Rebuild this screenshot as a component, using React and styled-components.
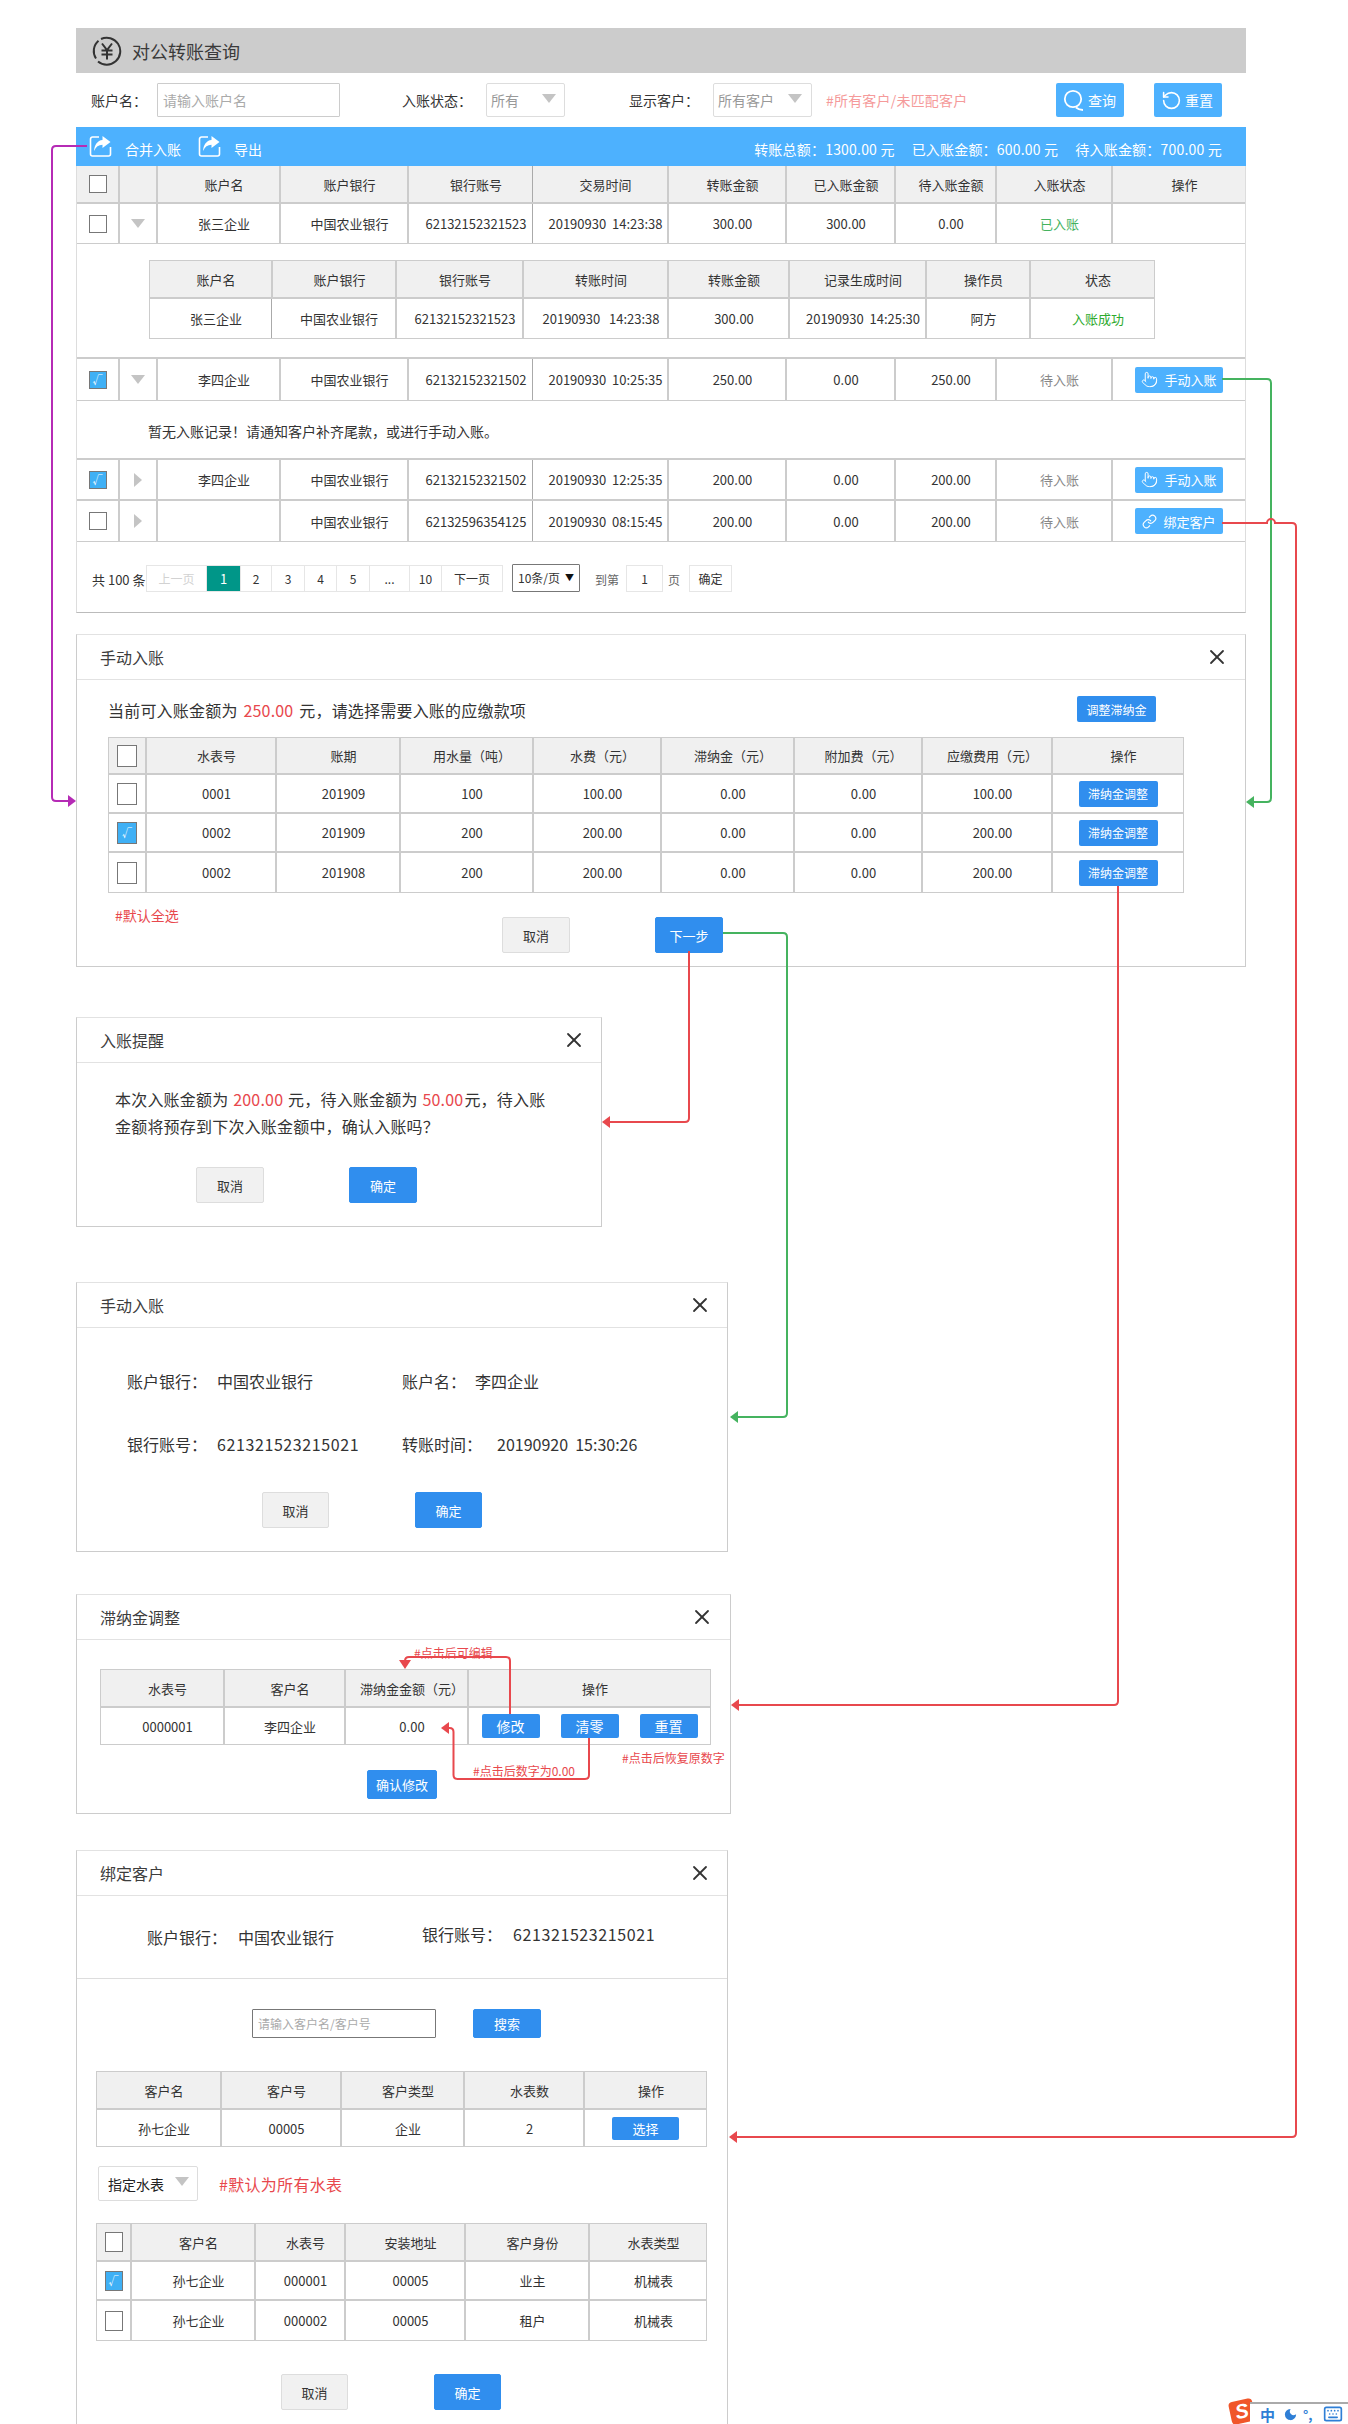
import React from "react";
import styled, { createGlobalStyle } from "styled-components";
import { X, Pointer, Link, RotateCcw, Moon, Keyboard } from "lucide-react";

const GlobalStyle = createGlobalStyle`
  html, body { margin: 0; padding: 0; background: #fff; }
  body { font-family: "Noto Sans CJK SC", "Noto Sans", sans-serif; color: #333; }
  * { box-sizing: border-box; }
`;

const BLUE = "#4db1fe";
const BTN_BLUE = "#308eee";
const LINE = "#ccc";
const RED = "#e8484d";
const GREEN = "#45b35f";
const PURPLE = "#b52bb5";

const Page = styled.div`
  position: relative;
  width: 1348px;
  height: 2424px;
  overflow: hidden;
  padding: 28px 0 0 76px;
`;

const TitleBar = styled.div`
  display: flex;
  align-items: center;
  gap: 10px;
  width: 1170px;
  height: 45px;
  padding-left: 16px;
  background: #ccc;
  font-size: 18px;
  color: #3a3a3a;
`;

const FilterRow = styled.div`
  display: flex;
  align-items: center;
  width: 1170px;
  height: 54px;
  padding-left: 15px;
  font-size: 14px;
`;

const FilterLabel = styled.span`
  flex: none;
  width: ${(p) => p.$w}px;
  margin-left: ${(p) => p.$ml || 0}px;
`;

const TextInput = styled.input`
  flex: none;
  width: ${(p) => p.$w}px;
  height: ${(p) => p.$h}px;
  padding: 0 5px;
  border: 1px solid ${(p) => p.$border || "#ccc"};
  border-radius: 1px;
  font: inherit;
  font-size: ${(p) => p.$size || 14}px;
  outline: none;
  &::placeholder { color: #aaa; }
`;

const SelectBox = styled.div`
  flex: none;
  display: flex;
  align-items: center;
  justify-content: space-between;
  width: ${(p) => p.$w}px;
  height: ${(p) => p.$h || 34}px;
  padding: 0 ${(p) => p.$pr || 8}px 0 ${(p) => p.$pl || 4}px;
  border: 1px solid #ddd;
  border-radius: 2px;
  font-size: 14px;
  color: ${(p) => p.$color || "#999"};
`;

const Triangle = styled.i`
  display: block;
  flex: none;
  width: 0;
  height: 0;
  ${(p) =>
    p.$dir === "right"
      ? `border-top: 7px solid transparent; border-bottom: 7px solid transparent; border-left: 8px solid #c4c4c4;`
      : `border-left: 7px solid transparent; border-right: 7px solid transparent; border-top: 9px solid #c4c4c4;`}
  margin-bottom: ${(p) => p.$mb || 0}px;
`;

const Hint = styled.span`
  flex: none;
  width: ${(p) => p.$w}px;
  margin-left: ${(p) => p.$ml}px;
  font-size: ${(p) => p.$size || 14}px;
  letter-spacing: ${(p) => p.$track || 0}px;
  color: ${(p) => p.$color};
`;

const ToolButton = styled.button`
  flex: none;
  display: flex;
  align-items: center;
  gap: 3px;
  width: 68px;
  height: 34px;
  margin-left: ${(p) => p.$ml || 0}px;
  padding: 0 0 0 7px;
  border: 0;
  border-radius: 2px;
  background: ${BLUE};
  color: #fff;
  font: inherit;
  font-size: 14px;
`;

const ToolBar = styled.div`
  display: flex;
  align-items: center;
  width: 1170px;
  height: 39px;
  padding: 0 24px 0 13px;
  background: ${BLUE};
  color: #fff;
  font-size: 14px;
`;

const ToolAction = styled.span`
  display: flex;
  align-items: center;
  gap: 13px;
  margin-right: 17px;
  span { padding-top: 5px; }
`;

const Totals = styled.div`
  display: flex;
  gap: 17px;
  margin-left: auto;
  padding-top: 5px;
  letter-spacing: 0.2px;
`;

const MainPanel = styled.div`
  width: 1170px;
  height: 447px;
  border-left: 1px solid #ddd;
  border-right: 1px solid #ddd;
  border-bottom: 1px solid #bbb;
`;

const Row = styled.div`
  display: grid;
  grid-template-columns: ${(p) => p.$cols};
  height: ${(p) => p.$h}px;
  border-bottom: ${(p) => p.$line ?? 2}px solid ${LINE};
  background: ${(p) => (p.$head ? "#f0f0f0" : "#fff")};
  &:last-child { ${(p) => (p.$keepLine ? "" : "border-bottom: 0;")} }
  ${(p) => (p.$dark ? `& > :nth-child(${p.$dark}) { border-left: 1px solid #aaa; }` : "")}
`;

const Cell = styled.div`
  display: flex;
  align-items: center;
  justify-content: center;
  min-width: 0;
  padding-left: ${(p) => (p.$flush ? 0 : 11)}px;
  border-left: 2px solid ${LINE};
  font-size: 13px;
  white-space: pre;
  color: ${(p) => p.$color || "#333"};
  &:first-child { border-left: 0; }
`;

const Check = styled.span`
  display: flex;
  align-items: center;
  justify-content: center;
  width: ${(p) => p.$w || 18}px;
  height: ${(p) => p.$h || 18}px;
  border: 1px solid #777;
  background: ${(p) => (p.$on ? "#3fb0f5" : "#fff")};
  color: #fff;
  font-size: 10px;
  line-height: 1;
`;

const RowButton = styled.button`
  display: flex;
  align-items: center;
  justify-content: center;
  gap: 6px;
  width: ${(p) => p.$w}px;
  height: ${(p) => p.$h}px;
  padding: 0;
  border: 0;
  border-radius: 2px;
  background: ${(p) => p.$bg || BLUE};
  color: #fff;
  font: inherit;
  font-size: ${(p) => p.$size || 13}px;
`;

const Expanded = styled.div`
  height: ${(p) => p.$h}px;
  padding: ${(p) => p.$pt}px 0 0 ${(p) => p.$pl}px;
  border-bottom: 2px solid ${LINE};
  font-size: 14px;
`;

const TableBox = styled.div`
  width: ${(p) => p.$w}px;
  margin: ${(p) => p.$mt || 0}px 0 0 ${(p) => p.$ml || 0}px;
  border: 1px solid ${LINE};
`;

const Pager = styled.div`
  display: flex;
  align-items: flex-start;
  height: 70px;
  padding: 23px 0 0 15px;
  font-size: 12px;
`;

const PagerTotal = styled.span`
  width: 54px;
  height: 27px;
  line-height: 30px;
  font-size: 13px;
`;

const PageCell = styled.span`
  display: flex;
  align-items: center;
  justify-content: center;
  width: ${(p) => p.$w}px;
  height: 27px;
  margin-left: ${(p) => p.$ml || 0}px;
  border: 1px solid #e6e6e6;
  border-left-width: ${(p) => (p.$first ? 1 : 0)}px;
  background: ${(p) => (p.$on ? "#009688" : "#fff")};
  color: ${(p) => (p.$on ? "#fff" : p.$off ? "#d2d2d2" : "#333")};
  font-size: ${(p) => (p.$on ? 13 : 12)}px;
`;

const PageSize = styled.span`
  display: flex;
  align-items: center;
  justify-content: space-between;
  width: 68px;
  height: 28px;
  margin: -1px 0 0 9px;
  padding: 0 5px 2px 5px;
  border: 1px solid #777;
  border-radius: 1px;
  small { font-size: 9px; color: #111; }
`;

const PagerText = styled.span`
  width: ${(p) => p.$w}px;
  margin-left: ${(p) => p.$ml}px;
  height: 27px;
  line-height: 30px;
  color: #666;
`;

const Modal = styled.section`
  width: ${(p) => p.$w}px;
  height: ${(p) => p.$h}px;
  margin-top: ${(p) => p.$mt}px;
  border: 1px solid #ccc;
  border-top-color: #e2e2e2;
`;

const ModalHead = styled.header`
  display: flex;
  align-items: center;
  justify-content: space-between;
  height: 45px;
  padding: 0 ${(p) => p.$pr || 15}px 0 23px;
  border-bottom: 1px solid #e2e2e2;
  font-size: 16px;
  color: #3d3d3d;
  svg { color: #333; }
`;

const PromptRow = styled.div`
  display: flex;
  align-items: flex-start;
  justify-content: space-between;
  height: 57px;
  padding: 16px 89px 0 31px;
`;

const Prompt = styled.p`
  margin: 0;
  font-size: 16px;
  line-height: 28px;
  letter-spacing: 0.2px;
  white-space: pre;
  em { font-style: normal; margin: 0 2px; color: ${RED}; }
`;

const ActionRow = styled.div`
  display: flex;
  align-items: flex-start;
  margin: ${(p) => p.$mt}px 0 0 ${(p) => p.$ml}px;
`;

const DefaultNote = styled.span`
  width: 387px;
  line-height: 20px;
  font-size: 14px;
  color: ${RED};
`;

const ActionButton = styled.button`
  flex: none;
  width: ${(p) => p.$w || 68}px;
  height: ${(p) => p.$h || 36}px;
  margin: ${(p) => p.$mt || 0}px 0 0 ${(p) => p.$ml || 0}px;
  padding: 0;
  border: 1px solid ${(p) => (p.$primary ? BTN_BLUE : "#ddd")};
  border-radius: 2px;
  background: ${(p) => (p.$primary ? BTN_BLUE : "#f1f1f1")};
  color: ${(p) => (p.$primary ? "#fff" : "#333")};
  font: inherit;
  font-size: 13px;
`;

const MessageBody = styled.p`
  margin: 0;
  padding: 23px 0 0 38px;
  font-size: 16px;
  line-height: 27px;
  letter-spacing: 0.2px;
  white-space: pre;
  em { font-style: normal; margin: 0 1px; color: ${RED}; }
`;

const InfoGrid = styled.div`
  display: grid;
  grid-template-columns: 275px auto;
  row-gap: 39px;
  padding: 41px 0 0 50px;
  font-size: 16px;
  line-height: 24px;
`;

const Field = styled.div`
  display: flex;
  white-space: pre;
  span { flex: none; width: ${(p) => p.$label}px; }
`;

const AccountNo = styled.b`
  font-weight: 400;
  letter-spacing: 0.6px;
`;

const ButtonBar = styled.div`
  display: flex;
  gap: 21px;
`;

const BindInfo = styled.div`
  display: flex;
  align-items: center;
  height: 83px;
  padding-left: 70px;
  border-bottom: 1px solid #ddd;
  font-size: 16px;
`;

const BindField = styled(Field)`
  width: 275px;
  margin-bottom: ${(p) => p.$mb || 0}px;
`;

const SearchRow = styled.div`
  display: flex;
  padding: 30px 0 0 175px;
`;

const MeterRow = styled.div`
  display: flex;
  align-items: center;
  margin: 19px 0 0 21px;
`;

const Annotation = styled.span`
  position: absolute;
  left: ${(p) => p.$x}px;
  top: ${(p) => p.$y}px;
  font-size: 12px;
  line-height: 16px;
  color: ${RED};
  white-space: nowrap;
`;

const Connectors = styled.svg`
  position: absolute;
  left: 0;
  top: 0;
  width: 1348px;
  height: 2424px;
  pointer-events: none;
`;

const ImeBar = styled.div`
  position: absolute;
  right: 0;
  top: 2402px;
  display: flex;
  align-items: center;
  width: 98px;
  height: 22px;
  padding-left: 10px;
  border-top: 2px solid #aaa;
  background: #fff;
  color: #2f7fd6;
`;

const ImeLogo = styled.span`
  position: absolute;
  right: 94px;
  top: 2400px;
  display: flex;
  align-items: center;
  justify-content: center;
  width: 24px;
  height: 23px;
  border-radius: 4px;
  background: #f0562a;
  transform: rotate(-12deg);
  color: #fff;
  font: italic 700 20px "Liberation Sans", sans-serif;
`;

const ImeZh = styled.b`
  width: 23px;
  font-size: 15px;
  font-weight: 700;
`;

const ImePunct = styled.span`
  width: 20px;
  margin-left: 5px;
  font-size: 13px;
  font-weight: 700;
  line-height: 1;
`;

// column edges measured off the page, turned into grid tracks
const tracks = (edges) =>
  edges
    .slice(1)
    .map((e, i) => {
      let w = e - edges[i];
      if (i === 0) w -= 1;
      if (i === edges.length - 2) w -= 1;
      return `${w}px`;
    })
    .join(" ");

const MAIN = tracks([76, 118, 156, 279, 407, 532, 667, 785, 894, 995, 1111, 1246]);
const NESTED = tracks([149, 271, 395, 522, 667, 788, 925, 1029, 1155]);
const ITEMS = tracks([108, 145, 275, 399, 532, 660, 793, 921, 1051, 1184]);
const LATE = tracks([100, 223, 344, 467, 711]);
const CUSTOMER = tracks([96, 220, 340, 463, 583, 707]);
const METERS = tracks([96, 130, 254, 344, 464, 588, 707]);

const YenIcon = () => (
  <svg width="30" height="30" viewBox="0 0 30 30" fill="none" stroke="#333" strokeWidth="2">
    <path d="M9 3 A13.5 13.5 0 1 1 6 25.5" />
    <path d="M4 22.5 A13.5 13.5 0 0 1 6.5 4.8" />
    <path d="M10 7.5 L15 14 L20 7.5 M9.5 14.5 H20.5 M9.5 18.5 H20.5 M15 14 V23.5" />
  </svg>
);

const ShareIcon = () => (
  <svg width="23" height="23" viewBox="0 0 23 23" fill="none">
    <path d="M10 2 H3.5 a2 2 0 0 0 -2 2 v15 a2 2 0 0 0 2 2 h16 a2 2 0 0 0 2 -2 V12" stroke="#fff" strokeWidth="1.6" />
    <path d="M13.5 1 L21.5 7 L13.5 13 V9.7 C9.5 9.7 6.8 11.8 5.2 16 C5 10.5 8.5 5.3 13.5 5 Z" fill="#fff" />
  </svg>
);

const SearchIcon = () => (
  <svg width="22" height="24" viewBox="0 0 22 24" fill="none" stroke="#fff" strokeWidth="1.8">
    <circle cx="10" cy="11" r="8.2" />
    <path d="M13 19.5 Q16 22 20 22" />
  </svg>
);

const Head = ({ cols, h = 38, titles, first, dark }) => (
  <Row $head $cols={cols} $h={h} $dark={dark}>
    {first}
    {titles.map((t, i) => (
      <Cell key={i}>{t}</Cell>
    ))}
  </Row>
);

const mainRows = [
  ["李四企业", "62132152321502", "20190930  12:25:35"],
  ["", "62132596354125", "20190930  08:15:45"],
];

const mainHead = ["账户名", "账户银行", "银行账号", "交易时间", "转账金额", "已入账金额", "待入账金额", "入账状态", "操作"];
const nestedHead = ["账户名", "账户银行", "银行账号", "转账时间", "转账金额", "记录生成时间", "操作员", "状态"];
const nestedRow = ["张三企业", "中国农业银行", "62132152321523", "20190930   14:23:38", "300.00", "20190930  14:25:30", "阿方"];
const itemHead = ["水表号", "账期", "用水量（吨）", "水费（元）", "滞纳金（元）", "附加费（元）", "应缴费用（元）", "操作"];
const itemRows = [
  [false, "0001", "201909", "100", "100.00", "0.00", "0.00", "100.00"],
  [true, "0002", "201909", "200", "200.00", "0.00", "0.00", "200.00"],
  [false, "0002", "201908", "200", "200.00", "0.00", "0.00", "200.00"],
];

const MainRow = ({ h, line, checked, open, name, account, time, amount, entered, pending, status, statusColor, action }) => (
  <Row $keepLine $dark={6} $cols={MAIN} $h={h} $line={line}>
    <Cell $flush>
      <Check $on={checked}>{checked ? "√" : ""}</Check>
    </Cell>
    <Cell $flush>
      <Triangle $dir={open ? "down" : "right"} />
    </Cell>
    <Cell>{name}</Cell>
    <Cell>中国农业银行</Cell>
    <Cell>{account}</Cell>
    <Cell>{time}</Cell>
    <Cell>{amount}</Cell>
    <Cell>{entered}</Cell>
    <Cell>{pending}</Cell>
    <Cell $color={statusColor}>{status}</Cell>
    <Cell $flush>{action}</Cell>
  </Row>
);

const ManualButton = () => (
  <RowButton $w={88} $h={26}>
    <Pointer size={17} strokeWidth={1.4} />
    手动入账
  </RowButton>
);

const BindButton = () => (
  <RowButton $w={88} $h={26}>
    <Link size={15} strokeWidth={1.8} />
    绑定客户
  </RowButton>
);

// connector lines between the panels
const lines = [
  { c: PURPLE, d: "M87 146 H56 q-4 0 -4 4 V797 q0 4 4 4 H70", head: "76,801 68,795 68,807" },
  { c: GREEN, d: "M1222 379 H1267 q4 0 4 4 V798 q0 4 -4 4 H1252", head: "1246,802 1254,796 1254,808" },
  { c: RED, d: "M1222 523 H1267 a4 4 0 0 1 8 0 H1292 q4 0 4 4 V2133 q0 4 -4 4 H735", head: "729,2137 737,2131 737,2143" },
  { c: RED, d: "M1118 886 V1701 q0 4 -4 4 H737", head: "731,1705 739,1699 739,1711" },
  { c: RED, d: "M689 951 V1118 q0 4 -4 4 H608", head: "602,1122 610,1116 610,1128" },
  { c: GREEN, d: "M723 933 H783 q4 0 4 4 V1413 q0 4 -4 4 H736", head: "730,1417 738,1411 738,1423" },
  { c: RED, d: "M510 1714 V1661 q0 -4 -4 -4 H409 q-4 0 -4 4 V1664", head: "405,1669 399,1660 411,1660" },
  { c: RED, d: "M589 1738 V1775 q0 4 -4 4 H457.5 q-4 0 -4 -4 V1732 q0 -4 -4 -4 H447", head: "441,1728 449,1722 449,1734" },
];

export default function App() {
  return (
    <Page>
      <GlobalStyle />

      <TitleBar>
        <YenIcon />
        对公转账查询
      </TitleBar>

      <FilterRow>
        <FilterLabel $w={66}>账户名：</FilterLabel>
        <TextInput $w={183} $h={34} placeholder="请输入账户名" />
        <FilterLabel $w={84} $ml={62}>入账状态：</FilterLabel>
        <SelectBox $w={79}>
          所有
          <Triangle $mb={4} />
        </SelectBox>
        <FilterLabel $w={84} $ml={64}>显示客户：</FilterLabel>
        <SelectBox $w={99} $pr={9}>
          所有客户
          <Triangle $mb={4} />
        </SelectBox>
        <Hint $w={230} $ml={14} $track={0.2} $color="#f59a9a">#所有客户/未匹配客户</Hint>
        <ToolButton>
          <SearchIcon />
          查询
        </ToolButton>
        <ToolButton $ml={30}>
          <RotateCcw size={21} strokeWidth={1.8} />
          重置
        </ToolButton>
      </FilterRow>

      <ToolBar>
        <ToolAction>
          <ShareIcon />
          <span>合并入账</span>
        </ToolAction>
        <ToolAction>
          <ShareIcon />
          <span>导出</span>
        </ToolAction>
        <Totals>
          <span>转账总额：1300.00 元</span>
          <span>已入账金额：600.00 元</span>
          <span>待入账金额：700.00 元</span>
        </Totals>
      </ToolBar>

      <MainPanel>
        <Head
          cols={MAIN}
          titles={mainHead}
          dark={6}
          first={
            <>
              <Cell $flush>
                <Check />
              </Cell>
              <Cell $flush />
            </>
          }
        />
        <MainRow
          h={40}
          line={1}
          open
          name="张三企业"
          account="62132152321523"
          time="20190930  14:23:38"
          amount="300.00"
          entered="300.00"
          pending="0.00"
          status="已入账"
          statusColor={GREEN}
        />
        <Expanded $h={115} $pt={16} $pl={72}>
          <TableBox $w={1006}>
            <Head cols={NESTED} titles={nestedHead} />
            <Row $cols={NESTED} $h={39} $dark={2}>
              {nestedRow.map((t, i) => (
                <Cell key={i}>{t}</Cell>
              ))}
              <Cell $color="#2eaa2e">入账成功</Cell>
            </Row>
          </TableBox>
        </Expanded>
        <MainRow
          h={42}
          line={1}
          checked
          open
          name="李四企业"
          account="62132152321502"
          time="20190930  10:25:35"
          amount="250.00"
          entered="0.00"
          pending="250.00"
          status="待入账"
          statusColor="#888"
          action={<ManualButton />}
        />
        <Expanded $h={59} $pt={20} $pl={71}>
          暂无入账记录！请通知客户补齐尾款，或进行手动入账。
        </Expanded>
        {mainRows.map(([name, account, time], i) => (
          <MainRow
            key={account}
            h={41}
            line={i === 0 ? 2 : 1}
            checked={i === 0}
            name={name}
            account={account}
            time={time}
            amount="200.00"
            entered="0.00"
            pending="200.00"
            status="待入账"
            statusColor="#888"
            action={i === 0 ? <ManualButton /> : <BindButton />}
          />
        ))}
        <Pager>
          <PagerTotal>共 100 条</PagerTotal>
          <PageCell $w={61} $off $first>上一页</PageCell>
          <PageCell $w={34} $on>1</PageCell>
          <PageCell $w={31}>2</PageCell>
          <PageCell $w={33}>3</PageCell>
          <PageCell $w={32}>4</PageCell>
          <PageCell $w={33}>5</PageCell>
          <PageCell $w={40}>...</PageCell>
          <PageCell $w={32}>10</PageCell>
          <PageCell $w={61}>下一页</PageCell>
          <PageSize>
            10条/页
            <small>▼</small>
          </PageSize>
          <PagerText $w={31} $ml={15}>到第</PagerText>
          <PageCell $w={37} $first>1</PageCell>
          <PagerText $w={21} $ml={5}>页</PagerText>
          <PageCell $w={43} $first>确定</PageCell>
        </Pager>
      </MainPanel>

      <Modal $w={1170} $h={333} $mt={21}>
        <ModalHead $pr={16}>
          手动入账
          <X size={24} strokeWidth={1.8} />
        </ModalHead>
        <PromptRow>
          <Prompt>当前可入账金额为 <em>250.00</em> 元，请选择需要入账的应缴款项</Prompt>
          <RowButton $w={79} $h={26} $bg={BTN_BLUE} $size={12}>调整滞纳金</RowButton>
        </PromptRow>
        <TableBox $w={1076} $ml={31}>
          <Head
            cols={ITEMS}
            h={37}
            titles={itemHead}
            first={
              <Cell $flush>
                <Check $w={20} $h={22} />
              </Cell>
            }
          />
          {itemRows.map(([on, ...vals], i) => (
            <Row key={i} $cols={ITEMS} $h={39}>
              <Cell $flush>
                <Check $w={20} $h={22} $on={on}>{on ? "√" : ""}</Check>
              </Cell>
              {vals.map((v, j) => (
                <Cell key={j}>{v}</Cell>
              ))}
              <Cell $flush>
                <RowButton $w={79} $h={26} $bg={BTN_BLUE} $size={12}>滞纳金调整</RowButton>
              </Cell>
            </Row>
          ))}
        </TableBox>
        <ActionRow $mt={12} $ml={38}>
          <DefaultNote>#默认全选</DefaultNote>
          <ActionButton $mt={12}>取消</ActionButton>
          <ActionButton $mt={12} $ml={85} $primary>下一步</ActionButton>
        </ActionRow>
      </Modal>

      <Modal $w={526} $h={210} $mt={50}>
        <ModalHead>
          入账提醒
          <X size={24} strokeWidth={1.8} />
        </ModalHead>
        <MessageBody>
          本次入账金额为 <em>200.00</em> 元，待入账金额为 <em>50.00</em>元，待入账{"\n"}金额将预存到下次入账金额中，确认入账吗？
        </MessageBody>
        <ActionRow $mt={27} $ml={119}>
          <ActionButton>取消</ActionButton>
          <ActionButton $ml={85} $primary>确定</ActionButton>
        </ActionRow>
      </Modal>

      <Modal $w={652} $h={270} $mt={55}>
        <ModalHead>
          手动入账
          <X size={24} strokeWidth={1.8} />
        </ModalHead>
        <InfoGrid>
          <Field $label={90}><span>账户银行：</span>中国农业银行</Field>
          <Field $label={73}><span>账户名：</span>李四企业</Field>
          <Field $label={90}><span>银行账号：</span><AccountNo>621321523215021</AccountNo></Field>
          <Field $label={95}><span>转账时间：</span>20190920  15:30:26</Field>
        </InfoGrid>
        <ActionRow $mt={36} $ml={185}>
          <ActionButton $w={67}>取消</ActionButton>
          <ActionButton $w={67} $ml={86} $primary>确定</ActionButton>
        </ActionRow>
      </Modal>

      <Modal $w={655} $h={220} $mt={42}>
        <ModalHead $pr={16}>
          滞纳金调整
          <X size={24} strokeWidth={1.8} />
        </ModalHead>
        <TableBox $w={611} $mt={29} $ml={23}>
          <Head cols={LATE} titles={["水表号", "客户名", "滞纳金金额（元）", "操作"]} />
          <Row $cols={LATE} $h={36}>
            <Cell>0000001</Cell>
            <Cell>李四企业</Cell>
            <Cell>0.00</Cell>
            <Cell $flush>
              <ButtonBar>
                <RowButton $w={58} $h={24} $bg={BTN_BLUE} $size={14}>修改</RowButton>
                <RowButton $w={58} $h={24} $bg={BTN_BLUE} $size={14}>清零</RowButton>
                <RowButton $w={58} $h={24} $bg={BTN_BLUE} $size={14}>重置</RowButton>
              </ButtonBar>
            </Cell>
          </Row>
        </TableBox>
        <ActionRow $mt={25} $ml={290}>
          <ActionButton $w={70} $h={29} $primary>确认修改</ActionButton>
        </ActionRow>
      </Modal>

      <Modal $w={652} $h={600} $mt={36}>
        <ModalHead>
          绑定客户
          <X size={24} strokeWidth={1.8} />
        </ModalHead>
        <BindInfo>
          <BindField $label={91}><span>账户银行：</span>中国农业银行</BindField>
          <BindField $label={91} $mb={6}><span>银行账号：</span><AccountNo>621321523215021</AccountNo></BindField>
        </BindInfo>
        <SearchRow>
          <TextInput $w={184} $h={29} $border="#777" $size={12} placeholder="请输入客户名/客户号" />
          <ActionButton $h={29} $ml={37} $primary>搜索</ActionButton>
        </SearchRow>
        <TableBox $w={611} $mt={33} $ml={19}>
          <Head cols={CUSTOMER} titles={["客户名", "客户号", "客户类型", "水表数", "操作"]} />
          <Row $cols={CUSTOMER} $h={36}>
            <Cell>孙七企业</Cell>
            <Cell>00005</Cell>
            <Cell>企业</Cell>
            <Cell>2</Cell>
            <Cell $flush>
              <RowButton $w={67} $h={23} $bg={BTN_BLUE}>选择</RowButton>
            </Cell>
          </Row>
        </TableBox>
        <MeterRow>
          <SelectBox $w={100} $h={35} $pl={9} $pr={8} $color="#222">
            指定水表
            <Triangle $mb={4} />
          </SelectBox>
          <Hint $w={200} $ml={21} $size={16} $track={0.3} $color={RED}>#默认为所有水表</Hint>
        </MeterRow>
        <TableBox $w={611} $mt={22} $ml={19}>
          <Head
            cols={METERS}
            titles={["客户名", "水表号", "安装地址", "客户身份", "水表类型"]}
            first={
              <Cell $flush>
                <Check $h={20} />
              </Cell>
            }
          />
          {[
            [true, "000001", "业主"],
            [false, "000002", "租户"],
          ].map(([on, meter, role]) => (
            <Row key={meter} $cols={METERS} $h={39}>
              <Cell $flush>
                <Check $h={20} $on={on}>{on ? "√" : ""}</Check>
              </Cell>
              <Cell>孙七企业</Cell>
              <Cell>{meter}</Cell>
              <Cell>00005</Cell>
              <Cell>{role}</Cell>
              <Cell>机械表</Cell>
            </Row>
          ))}
        </TableBox>
        <ActionRow $mt={33} $ml={204}>
          <ActionButton $w={67}>取消</ActionButton>
          <ActionButton $w={67} $ml={86} $primary>确定</ActionButton>
        </ActionRow>
      </Modal>

      <Connectors viewBox="0 0 1348 2424" fill="none">
        {lines.map((l, i) => (
          <g key={i}>
            <path d={l.d} stroke={l.c} strokeWidth="2" />
            <polygon points={l.head} fill={l.c} />
          </g>
        ))}
      </Connectors>
      <Annotation $x={414} $y={1645}>#点击后可编辑</Annotation>
      <Annotation $x={622} $y={1750}>#点击后恢复原数字</Annotation>
      <Annotation $x={473} $y={1763}>#点击后数字为0.00</Annotation>

      <ImeLogo>S</ImeLogo>
      <ImeBar>
        <ImeZh>中</ImeZh>
        <Moon size={15} fill="#2f7fd6" strokeWidth={0} />
        <ImePunct>°,</ImePunct>
        <Keyboard size={20} strokeWidth={2} />
      </ImeBar>
    </Page>
  );
}
